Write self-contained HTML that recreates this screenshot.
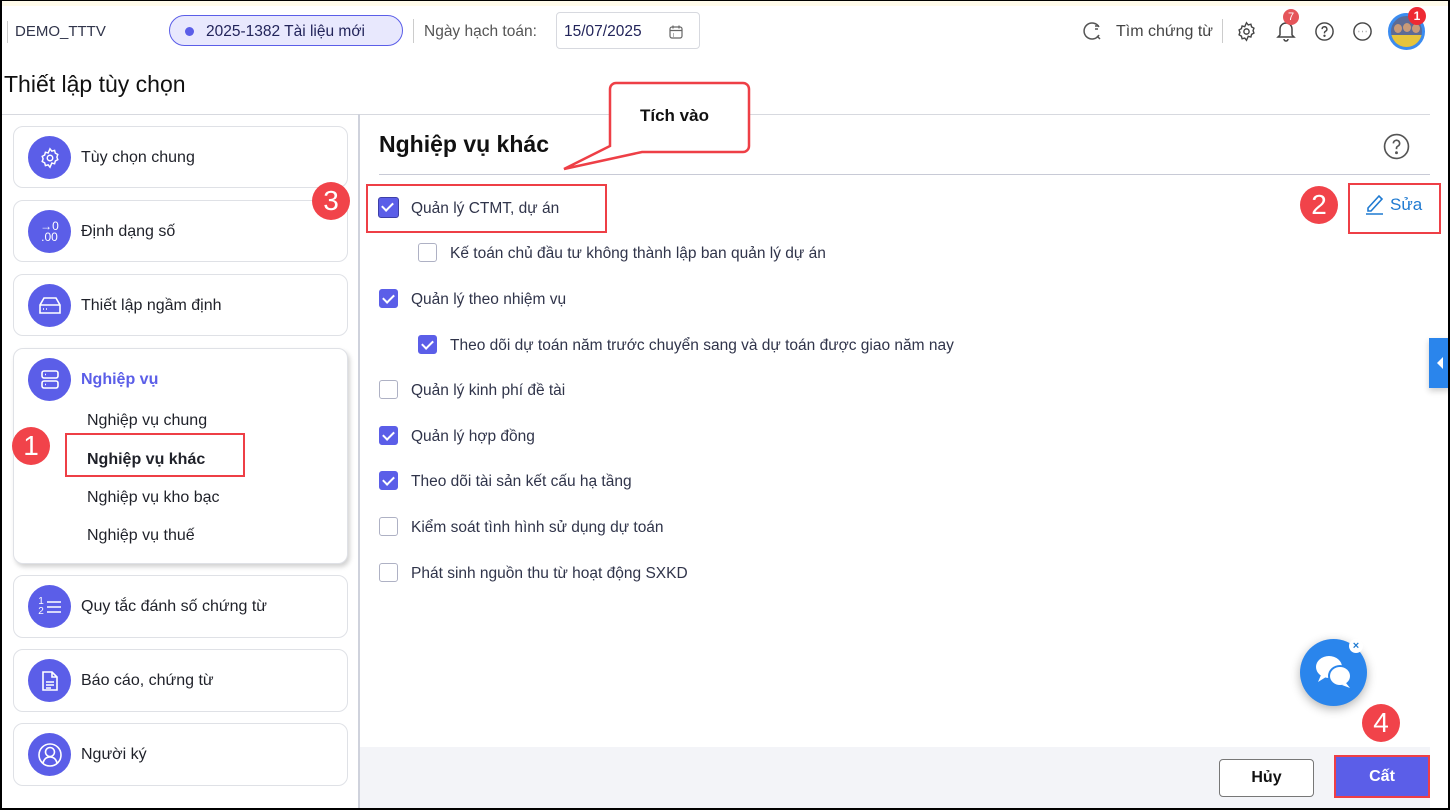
<!DOCTYPE html>
<html><head><meta charset="utf-8">
<style>
*{box-sizing:border-box;margin:0;padding:0}
body{width:1450px;height:810px;overflow:hidden;background:#fff;font-family:"Liberation Sans",sans-serif;color:#1f2129;position:relative}
.abs{position:absolute}
.frame{position:absolute;left:0;top:0;width:1450px;height:810px;border:2px solid #000;border-top:1px solid #000;pointer-events:none;z-index:50}
.card{position:absolute;left:13px;width:335px;border:1px solid #dfe1e6;border-radius:10px;background:#fff}
.ic{position:absolute;left:14px;width:43px;height:43px;border-radius:50%;background:#5b5ee8;display:flex;align-items:center;justify-content:center}
.lbl{position:absolute;left:67px;font-size:16px;color:#1f2129}
.cb{position:absolute;width:19px;height:19px;border-radius:3px;border:1px solid #aeb1c4;background:#fff}
.cb.on{background:#5b5ee8;border-color:#5b5ee8}
.cb.on::after{content:"";position:absolute;left:5px;top:2px;width:5px;height:9px;border:solid #fff;border-width:0 2px 2px 0;transform:rotate(45deg)}
.t{position:absolute;font-size:15.5px;color:#30344a}
.badge{position:absolute;width:38px;height:38px;border-radius:50%;background:#f1434a;color:#fff;font-size:28px;display:flex;align-items:center;justify-content:center}
.red{position:absolute;border:2px solid #ee3f46}
</style></head><body>
<div class="abs" style="left:0;top:0;width:1450px;height:6px;background:#fffbea"></div>
<!-- header -->
<div class="abs" style="left:7px;top:21px;width:1px;height:22px;background:#ccc"></div>
<div class="abs" style="left:15px;top:23px;font-size:15px;color:#30344a">DEMO_TTTV</div>
<div class="abs" style="left:169px;top:15px;width:234px;height:31px;border:1px solid #5b5ee8;border-radius:16px;background:#e8e8fd"></div>
<div class="abs" style="left:185px;top:27px;width:9px;height:9px;border-radius:50%;background:#5b5ee8"></div>
<div class="abs" style="left:206px;top:23px;font-size:15.5px;color:#22245a">2025-1382 Tài liệu mới</div>
<div class="abs" style="left:413px;top:19px;width:1px;height:24px;background:#ccc"></div>
<div class="abs" style="left:424px;top:23px;font-size:15.5px;color:#555">Ngày hạch toán:</div>
<div class="abs" style="left:556px;top:12px;width:144px;height:37px;border:1px solid #d7d9df;border-radius:4px"></div>
<div class="abs" style="left:564px;top:23px;font-size:15.5px;color:#22245a">15/07/2025</div>
<svg class="abs" style="left:668px;top:24px" width="16" height="16" viewBox="0 0 16 16" fill="none" stroke="#666" stroke-width="1.2"><rect x="2" y="3" width="12" height="11" rx="2"/><path d="M2 6.5h12M5 1.5v3M11 1.5v3"/><path d="M5 10h1M5 12h1" stroke-width="1"/></svg>
<svg class="abs" style="left:1082px;top:20px" width="22" height="22" viewBox="0 0 22 22" fill="none" stroke="#555" stroke-width="1.5"><path d="M17 7A8 8 0 1 0 17 15"/><path d="M13 6h4M13 9h3M15 16l3 3"/></svg>
<div class="abs" style="left:1116px;top:23px;font-size:16px;color:#444">Tìm chứng từ</div>
<div class="abs" style="left:1222px;top:19px;width:1px;height:24px;background:#ccc"></div>
<svg class="abs" style="left:1236px;top:21px" width="21" height="21" viewBox="0 0 24 24" fill="none" stroke="#444" stroke-width="1.6"><circle cx="12" cy="12" r="3"/><path d="M12 2l2 2.5 3-.8.8 3 2.7 1.5-1 2.8 1 2.8-2.7 1.5-.8 3-3-.8L12 22l-2-2.5-3 .8-.8-3L3.5 15.8l1-2.8-1-2.8 2.7-1.5.8-3 3 .8z"/></svg>
<svg class="abs" style="left:1276px;top:20px" width="20" height="22" viewBox="0 0 20 22" fill="none" stroke="#444" stroke-width="1.5"><path d="M4 15V9a6 6 0 0 1 12 0v6l2 2H2z"/><path d="M8 19a2 2 0 0 0 4 0"/></svg>
<div class="abs" style="left:1283px;top:9px;width:16px;height:16px;border-radius:50%;background:#e5555a;color:#fff;font-size:11px;text-align:center;line-height:16px">7</div>
<svg class="abs" style="left:1314px;top:21px" width="21" height="21" viewBox="0 0 22 22" fill="none" stroke="#444" stroke-width="1.5"><circle cx="11" cy="11" r="9"/><path d="M8.5 8.5a2.5 2.5 0 1 1 3.5 2.3c-.7.3-1 .8-1 1.5v.7"/><circle cx="11" cy="15.5" r=".5" fill="#444"/></svg>
<svg class="abs" style="left:1352px;top:21px" width="21" height="21" viewBox="0 0 22 22" fill="none" stroke="#444" stroke-width="1.5"><circle cx="11" cy="11" r="9"/><path d="M7 11h.5M10.8 11h.5M14.5 11h.5" stroke-width="1.6"/></svg>
<div class="abs" style="left:1388px;top:13px;width:37px;height:37px;border-radius:50%;border:3px solid #3b8cf0;background:#5d6b95;overflow:hidden">
<div class="abs" style="left:3px;top:8px;width:8px;height:9px;border-radius:50%;background:#c99a78"></div>
<div class="abs" style="left:12px;top:7px;width:8px;height:9px;border-radius:50%;background:#c99a78"></div>
<div class="abs" style="left:21px;top:8px;width:8px;height:9px;border-radius:50%;background:#c99a78"></div>
<div class="abs" style="left:0;top:19px;width:31px;height:12px;background:#e6c43c"></div></div>
<div class="abs" style="left:1408px;top:7px;width:18px;height:18px;border-radius:50%;background:#ee2a33;color:#fff;font-size:12px;font-weight:bold;text-align:center;line-height:18px">1</div>

<div class="abs" style="left:4px;top:71px;font-size:23px;color:#111">Thiết lập tùy chọn</div>
<div class="abs" style="left:0;top:114px;width:1430px;height:1px;background:#d7d9df"></div>
<div class="abs" style="left:358px;top:114px;width:2px;height:696px;background:#cfd2dc"></div>

<!-- sidebar -->
<div class="card" style="top:126px;height:62px"><div class="ic" style="top:9px"><svg width="22" height="22" viewBox="0 0 24 24" fill="none" stroke="#fff" stroke-width="1.6"><circle cx="12" cy="12" r="3"/><path d="M12 2l2 2.5 3-.8.8 3 2.7 1.5-1 2.8 1 2.8-2.7 1.5-.8 3-3-.8L12 22l-2-2.5-3 .8-.8-3L3.5 15.8l1-2.8-1-2.8 2.7-1.5.8-3 3 .8z"/></svg></div><div class="lbl" style="top:22px">Tùy chọn chung</div></div>
<div class="card" style="top:200px;height:62px"><div class="ic" style="top:9px;color:#fff;font-size:12px;line-height:11px;text-align:center;flex-direction:column"><span>→0</span><span>.00</span></div><div class="lbl" style="top:22px">Định dạng số</div></div>
<div class="card" style="top:274px;height:62px"><div class="ic" style="top:9px"><svg width="24" height="22" viewBox="0 0 24 22" fill="none" stroke="#fff" stroke-width="1.6"><path d="M6 3h12l4 7v8H2v-8z"/><path d="M2 10h20"/><path d="M5 14h1M8 14h1"/></svg></div><div class="lbl" style="top:22px">Thiết lập ngầm định</div></div>
<div class="card" style="top:348px;height:216px;box-shadow:2px 3px 5px rgba(0,0,0,.18)"><div class="ic" style="top:9px"><svg width="22" height="22" viewBox="0 0 22 22" fill="none" stroke="#fff" stroke-width="1.6"><rect x="3" y="2" width="16" height="7" rx="2"/><rect x="3" y="12" width="16" height="7" rx="2"/><path d="M6 5.5h1M6 15.5h1"/></svg></div>
<div class="lbl" style="top:22px;color:#5b5ee8;font-weight:bold">Nghiệp vụ</div>
<div class="lbl" style="left:73px;top:63px">Nghiệp vụ chung</div>
<div class="lbl" style="left:73px;top:102px;font-weight:bold">Nghiệp vụ khác</div>
<div class="lbl" style="left:73px;top:140px">Nghiệp vụ kho bạc</div>
<div class="lbl" style="left:73px;top:178px">Nghiệp vụ thuế</div></div>
<div class="card" style="top:575px;height:63px"><div class="ic" style="top:9px;gap:3px"><span style="color:#fff;font-size:10px;line-height:10px;text-align:center">1<br>2</span><svg width="14" height="14" viewBox="0 0 14 14" stroke="#fff" stroke-width="1.5"><path d="M0 2h14M0 7h14M0 12h14"/></svg></div><div class="lbl" style="top:22px">Quy tắc đánh số chứng từ</div></div>
<div class="card" style="top:649px;height:63px"><div class="ic" style="top:9px"><svg width="18" height="22" viewBox="0 0 18 22" fill="none" stroke="#fff" stroke-width="1.6"><path d="M2 2h9l5 5v13H2z"/><path d="M11 2v5h5M5 12h8M5 15h8M5 18h5"/></svg></div><div class="lbl" style="top:22px">Báo cáo, chứng từ</div></div>
<div class="card" style="top:723px;height:63px"><div class="ic" style="top:9px"><svg width="26" height="26" viewBox="0 0 26 26" fill="none" stroke="#fff" stroke-width="1.6"><circle cx="13" cy="13" r="11"/><circle cx="13" cy="10" r="4.5"/><path d="M6 21c1-4 3-6 7-6s6 2 7 6"/></svg></div><div class="lbl" style="top:22px">Người ký</div></div>

<div class="badge" style="left:12px;top:427px">1</div>
<div class="red" style="left:65px;top:433px;width:180px;height:44px"></div>
<div class="badge" style="left:312px;top:182px">3</div>

<!-- content -->
<div class="abs" style="left:379px;top:131px;font-size:23px;font-weight:bold;color:#111">Nghiệp vụ khác</div>
<svg class="abs" style="left:1383px;top:133px" width="27" height="27" viewBox="0 0 26 26" fill="none" stroke="#555" stroke-width="1.6"><circle cx="13" cy="13" r="11.5"/><path d="M10 10a3 3 0 1 1 4.3 2.7c-.8.4-1.3 1-1.3 1.9v.9"/><circle cx="13" cy="19" r=".6" fill="#555"/></svg>
<div class="abs" style="left:379px;top:174px;width:1051px;height:1px;background:#c8cad6"></div>

<!-- callout -->
<svg class="abs" style="left:555px;top:80px" width="200" height="95" viewBox="0 0 200 95"><path d="M62 3h126a6 6 0 0 1 6 6v57a6 6 0 0 1-6 6H87L9 89 55 66V9a6 6 0 0 1 6-6z" fill="#fff" stroke="#ee3f46" stroke-width="2.5"/></svg>
<div class="abs" style="left:640px;top:106px;font-size:17px;font-weight:bold;color:#111">Tích vào</div>

<div class="red" style="left:366px;top:184px;width:241px;height:49px"></div>
<div class="cb on" style="left:378px;top:197px;width:21px;height:21px;border:1px solid #3d3fa8"></div>
<div class="t" style="left:411px;top:200px">Quản lý CTMT, dự án</div>
<div class="cb" style="left:418px;top:243px"></div><div class="t" style="left:450px;top:245px">Kế toán chủ đầu tư không thành lập ban quản lý dự án</div>
<div class="cb on" style="left:379px;top:289px"></div><div class="t" style="left:411px;top:291px">Quản lý theo nhiệm vụ</div>
<div class="cb on" style="left:418px;top:335px"></div><div class="t" style="left:450px;top:337px">Theo dõi dự toán năm trước chuyển sang và dự toán được giao năm nay</div>
<div class="cb" style="left:379px;top:380px"></div><div class="t" style="left:411px;top:382px">Quản lý kinh phí đề tài</div>
<div class="cb on" style="left:379px;top:426px"></div><div class="t" style="left:411px;top:428px">Quản lý hợp đồng</div>
<div class="cb on" style="left:379px;top:471px"></div><div class="t" style="left:411px;top:473px">Theo dõi tài sản kết cấu hạ tầng</div>
<div class="cb" style="left:379px;top:517px"></div><div class="t" style="left:411px;top:519px">Kiểm soát tình hình sử dụng dự toán</div>
<div class="cb" style="left:379px;top:563px"></div><div class="t" style="left:411px;top:565px">Phát sinh nguồn thu từ hoạt động SXKD</div>

<div class="badge" style="left:1300px;top:186px">2</div>
<div class="red" style="left:1348px;top:183px;width:93px;height:51px"></div>
<svg class="abs" style="left:1365px;top:192px" width="21" height="23" viewBox="0 0 21 23" fill="none" stroke="#1f7ad1" stroke-width="1.6"><path d="M3 16L14 4l3 3L6 19H3z"/><path d="M1 22h17"/></svg>
<div class="abs" style="left:1390px;top:195px;font-size:17px;color:#1f7ad1">Sửa</div>

<div class="abs" style="left:1429px;top:338px;width:21px;height:50px;background:#2a85ec;box-shadow:0 3px 6px rgba(0,0,0,.2)"></div>
<div class="abs" style="left:1437px;top:357px;width:0;height:0;border-top:6px solid transparent;border-bottom:6px solid transparent;border-right:6px solid #fff"></div>

<!-- chat -->
<div class="abs" style="left:1300px;top:639px;width:67px;height:67px;border-radius:50%;background:#2a85ec;box-shadow:0 3px 10px rgba(0,0,0,.3)"></div>
<svg class="abs" style="left:1313px;top:652px" width="42" height="42" viewBox="0 0 42 42"><ellipse cx="16" cy="15" rx="13" ry="11" fill="#fff"/><path d="M8 23l-3 7 8-5z" fill="#fff"/><ellipse cx="27" cy="24" rx="12" ry="11" fill="#2a85ec"/><ellipse cx="27" cy="24" rx="10" ry="9" fill="#fff"/><path d="M33 31l4 5-8-3z" fill="#fff"/></svg>
<div class="abs" style="left:1349px;top:639px;width:14px;height:14px;border-radius:50%;background:#fff;color:#1f7ad1;font-size:11px;font-weight:bold;text-align:center;line-height:14px">×</div>

<!-- footer -->
<div class="abs" style="left:360px;top:747px;width:1070px;height:63px;background:#f3f4f8"></div>
<div class="abs" style="left:1219px;top:759px;width:95px;height:38px;border:1px solid #777;border-radius:4px;background:#fff;font-size:16px;font-weight:bold;text-align:center;line-height:36px;color:#111">Hủy</div>
<div class="abs" style="left:1334px;top:755px;width:96px;height:43px;border:2px solid #ee3f46;background:#5b5ee8;color:#fff;font-size:16px;font-weight:bold;text-align:center;line-height:39px">Cất</div>
<div class="badge" style="left:1362px;top:704px">4</div>
<div class="frame"></div>
</body></html>
